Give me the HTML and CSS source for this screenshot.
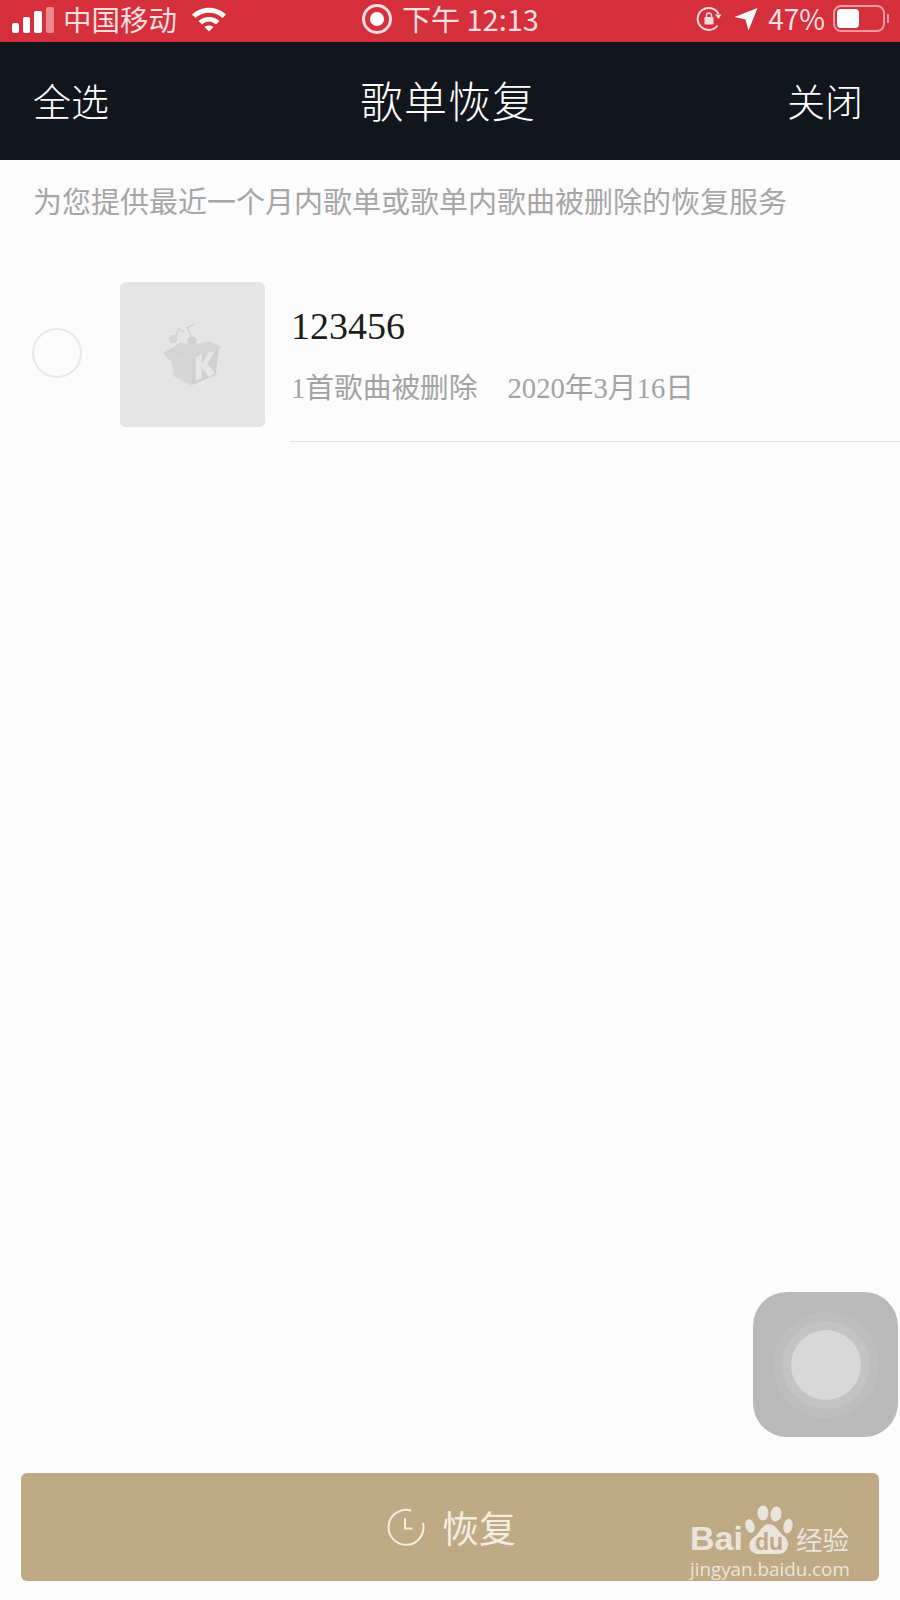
FILE: index.html
```html
<!DOCTYPE html>
<html lang="zh-CN">

<head>
    <meta charset="UTF-8">
    <meta name="viewport" content="width=device-width, initial-scale=1.0">
    <title>歌单恢复</title>
    <link rel="stylesheet" href="styles.css">
</head>

<body>
    <div class="status-bar">
        <div class="status-left">
            <div class="signal">
                <span class="bar bar1"></span>
                <span class="bar bar2"></span>
                <span class="bar bar3"></span>
                <span class="bar bar4"></span>
            </div>
            <span class="carrier">中国移动</span>
            <svg class="wifi" viewBox="0 0 36 26" width="36" height="26">
                <path d="M1 8.500C10.500 -0.500 25.500 -0.500 35 8.500L31.500 12C24 5 12 5 4.500 12Z" fill="#fff"/>
                <path d="M7.500 15C13.500 9.500 22.500 9.500 28.500 15L25 18.500C20.500 14.500 15.500 14.500 11 18.500Z" fill="#fff"/>
                <path d="M13.500 21C16 19 20 19 22.500 21L18 25.500Z" fill="#fff"/>
            </svg>
        </div>
        <div class="status-center">
            <span class="record"><span class="record-dot"></span></span>
            <span class="clock-text">下午 12:13</span>
        </div>
        <div class="status-right">
            <svg class="rotate-lock" viewBox="0 0 26 26" width="26" height="26">
                <path d="M21.500 19.500A11 11 0 1 1 22.500 8" fill="none" stroke="#f6dadc" stroke-width="2"/>
                <path d="M19 8.500H25.500L22.500 13Z" fill="#f6dadc"/>
                <rect x="8.500" y="11" width="9" height="7.500" rx="1" fill="#f6dadc"/>
                <path d="M10.500 11V9.500A2.500 2.500 0 0 1 15.500 9.500V11" fill="none" stroke="#f6dadc" stroke-width="1.500"/>
            </svg>
            <svg class="arrow" viewBox="0 0 24 24" width="24" height="24">
                <path d="M23.500 1L14.500 23.500L11.500 12.500L0.500 10Z" fill="#fff"/>
            </svg>
            <span class="percent">47%</span>
            <div class="battery"><span class="battery-fill"></span></div>
            <span class="battery-nub"></span>
        </div>
    </div>

    <div class="nav-bar">
        <span class="nav-action">全选</span>
        <span class="nav-title">歌单恢复</span>
        <span class="nav-action nav-close">关闭</span>
    </div>

    <p class="hint">为您提供最近一个月内歌单或歌单内歌曲被删除的恢复服务</p>

    <div class="song-row">
        <div class="radio-wrap"><span class="radio"></span></div>
        <div class="thumb">
            <svg viewBox="100 95 180 195" width="60" height="65">
                <circle cx="130" cy="146" r="12" fill="#d4d4d4"/>
                <path d="M138 146L145 116L163 125" fill="none" stroke="#d4d4d4" stroke-width="5"/>
                <path d="M190 150L172 112L192 102" fill="none" stroke="#d4d4d4" stroke-width="5"/>
                <circle cx="187" cy="153" r="14" fill="#d0d0d0"/>
                <path d="M122 190L185 208V285L132 258Z" fill="#d6d6d6"/>
                <path d="M185 208L268 172L258 255L185 285Z" fill="#d0d0d0"/>
                <path d="M100 188L150 158L205 160L240 152L276 170L185 208L150 200L125 215Z" fill="#d4d4d4"/>
                <path d="M198 202L216 192V220L238 186L256 182L234 219L256 250L238 260L216 232V264L198 272Z" fill="#e6e6e6"/>
            </svg>
        </div>
        <div class="song-info">
            <div class="song-name">123456</div>
            <div class="song-meta">
                <span>1首歌曲被删除</span>
                <span>2020年3月16日</span>
            </div>
        </div>
    </div>

    <div class="spacer"></div>

    <div class="float-btn">
        <span class="ring-outer"><span class="ring-mid"><span class="ring-inner"></span></span></span>
    </div>

    <div class="restore-btn">
        <svg class="restore-icon" viewBox="0 0 38 38" width="38" height="38">
            <path d="M24 2.500A17.500 17.500 0 1 0 36 15" fill="none" stroke="#f3ede2" stroke-width="2"/>
            <path d="M18 10V20.500H25.500" fill="none" stroke="#f3ede2" stroke-width="2"/>
        </svg>
        <span class="restore-label">恢复</span>

        <div class="watermark">
            <div class="wm-logo">
                <span class="wm-bai">Bai</span>
                <span class="wm-paw">
                    <svg viewBox="0 0 48 50" width="48" height="50">
                        <ellipse cx="5" cy="21" rx="4.500" ry="7" fill="#e9e5dc" transform="rotate(-15 5 21)"/>
                        <ellipse cx="18" cy="8" rx="5.500" ry="7.500" fill="#e9e5dc"/>
                        <ellipse cx="31" cy="9" rx="5.500" ry="7.500" fill="#e9e5dc" transform="rotate(8 31 9)"/>
                        <ellipse cx="43" cy="21" rx="4.500" ry="7.500" fill="#e9e5dc" transform="rotate(12 43 21)"/>
                        <path d="M24 19C31 19 33 27 39 31C46 36 44 49 33 49H14C4 49 1 38 9 32C15 28 17 19 24 19Z" fill="#e9e5dc"/>
                    </svg>
                    <span class="wm-du">du</span>
                </span>
                <span class="wm-jy">经验</span>
            </div>
            <div class="wm-url">jingyan.baidu.com</div>
        </div>
    </div>
</body>

</html>
```

FILE: styles.css
```css
body {
    font-family: "Noto Sans CJK SC", "Noto Sans", sans-serif;
    background-color: #fcfcfc;
    display: flex;
    flex-direction: column;
    height: 100vh;
    margin: 0;
    padding: 0;
    position: relative;
    overflow: hidden;
}

.status-bar {
    background-color: #d42f3a;
    height: 42px;
    box-sizing: border-box;
    display: grid;
    grid-template-columns: 1fr auto 1fr;
    align-items: center;
    padding: 0 11px 5px 12px;
    color: #f8dfe0;
}

.status-left {
    display: flex;
    align-items: center;
}

.signal {
    display: flex;
    align-items: flex-end;
    gap: 4px;
    height: 26px;
    margin-top: 3px;
}

.bar {
    display: block;
    background-color: #fff;
    border-radius: 2px;
}

.bar1 {
    width: 7px;
    height: 10px;
}

.bar2 {
    width: 7px;
    height: 16px;
}

.bar3 {
    width: 8px;
    height: 22px;
}

.bar4 {
    width: 8px;
    height: 26px;
    background-color: #e88a90;
}

.carrier {
    font-size: 28.500px;
    line-height: 37px;
    margin-left: 9px;
}

.wifi {
    margin-left: 14px;
}

.status-center {
    display: flex;
    align-items: center;
}

.record {
    width: 30px;
    height: 30px;
    box-sizing: border-box;
    border: 3px solid #f8dfe0;
    border-radius: 50%;
    display: flex;
    align-items: center;
    justify-content: center;
}

.record-dot {
    width: 14px;
    height: 14px;
    background-color: #fff;
    border-radius: 50%;
}

.clock-text {
    font-size: 29px;
    line-height: 37px;
    margin-left: 10px;
    white-space: nowrap;
}

.status-right {
    display: flex;
    align-items: center;
    justify-content: flex-end;
}

.arrow {
    margin-left: 12px;
}

.percent {
    font-size: 28px;
    line-height: 37px;
    margin-left: 10px;
}

.battery {
    width: 52px;
    height: 27px;
    box-sizing: border-box;
    border: 2px solid #ee9ba0;
    border-radius: 8px;
    padding: 2px;
    margin-left: 8px;
}

.battery-fill {
    display: block;
    width: 22px;
    height: 100%;
    background-color: #fff;
    border-radius: 4px;
}

.battery-nub {
    width: 2px;
    height: 9px;
    margin-left: 2px;
    background-color: #ee9ba0;
}

.nav-bar {
    background-color: #11151c;
    height: 118px;
    box-sizing: border-box;
    display: grid;
    grid-template-columns: 1fr auto 1fr;
    align-items: center;
    padding: 0 37px 4px 33px;
    color: #fff;
}

.nav-action {
    font-size: 38px;
    font-weight: 300;
}

.nav-close {
    text-align: right;
}

.nav-title {
    font-size: 43px;
    font-weight: 300;
    letter-spacing: 1px;
}

.hint {
    font-size: 29px;
    line-height: 40px;
    color: #a6a6a6;
    margin: 20px 0 0 33px;
}

.song-row {
    display: flex;
    align-items: flex-start;
    margin-top: 62px;
    padding-left: 32px;
}

.radio-wrap {
    width: 50px;
    height: 141px;
    display: flex;
    align-items: center;
}

.radio {
    width: 50px;
    height: 50px;
    box-sizing: border-box;
    border: 2px solid #e8e8e8;
    border-radius: 50%;
}

.thumb {
    width: 145px;
    height: 145px;
    margin-left: 38px;
    background-color: #e5e5e5;
    border-radius: 6px;
    display: flex;
    align-items: center;
    justify-content: center;
    flex-shrink: 0;
}

.song-info {
    flex: 1;
    margin-left: 25px;
    height: 160px;
    box-sizing: border-box;
    border-bottom: 1px solid #dfdfdf;
    padding-left: 1px;
}

.song-name {
    font-family: "Liberation Serif", "Noto Sans CJK SC", serif;
    font-size: 38px;
    line-height: 44px;
    color: #1c1c1c;
    margin-top: 22px;
}

.song-meta {
    font-family: "Liberation Serif", "Noto Sans CJK SC", serif;
    font-size: 28.700px;
    line-height: 40px;
    color: #a3a3a3;
    margin-top: 20px;
    display: flex;
    gap: 30px;
}

.spacer {
    flex: 1;
}

.float-btn {
    position: absolute;
    left: 753px;
    top: 1292px;
    width: 145px;
    height: 145px;
    background-color: #b9b9b9;
    border-radius: 34px;
    display: flex;
    align-items: center;
    justify-content: center;
}

.ring-outer,
.ring-mid {
    display: flex;
    align-items: center;
    justify-content: center;
    border-radius: 50%;
}

.ring-outer {
    width: 106px;
    height: 106px;
    background-color: #bdbdbd;
}

.ring-mid {
    width: 88px;
    height: 88px;
    background-color: #c3c3c3;
}

.ring-inner {
    width: 70px;
    height: 70px;
    border-radius: 50%;
    background-color: #d8d8d8;
}

.restore-btn {
    position: relative;
    background-color: #c0a985;
    height: 108px;
    margin: 0 21px 19px;
    border-radius: 6px;
    display: flex;
    align-items: center;
    justify-content: center;
    color: #f3ede2;
}

.restore-icon {
    margin-left: 3px;
}

.restore-label {
    font-size: 37px;
    margin-left: 17px;
}

.watermark {
    position: absolute;
    left: 669px;
    top: 32px;
    width: 170px;
    color: #e9e5dc;
}

.wm-logo {
    display: flex;
    align-items: flex-end;
    height: 50px;
}

.wm-bai {
    font-family: "Liberation Sans", sans-serif;
    font-size: 34px;
    font-weight: 700;
    line-height: 34px;
}

.wm-paw {
    position: relative;
    width: 48px;
    height: 50px;
    margin-left: 2px;
}

.wm-du {
    position: absolute;
    left: 10px;
    bottom: 1px;
    font-family: "Liberation Sans", sans-serif;
    font-size: 23px;
    line-height: 24px;
    font-weight: 700;
    color: #c0a985;
}

.wm-jy {
    font-size: 26.500px;
    line-height: 32px;
    margin-left: 3px;
    white-space: nowrap;
}

.wm-url {
    font-family: "Open Sans", sans-serif;
    font-size: 18.800px;
    line-height: 24px;
    margin-top: 2px;
    white-space: nowrap;
}
```
